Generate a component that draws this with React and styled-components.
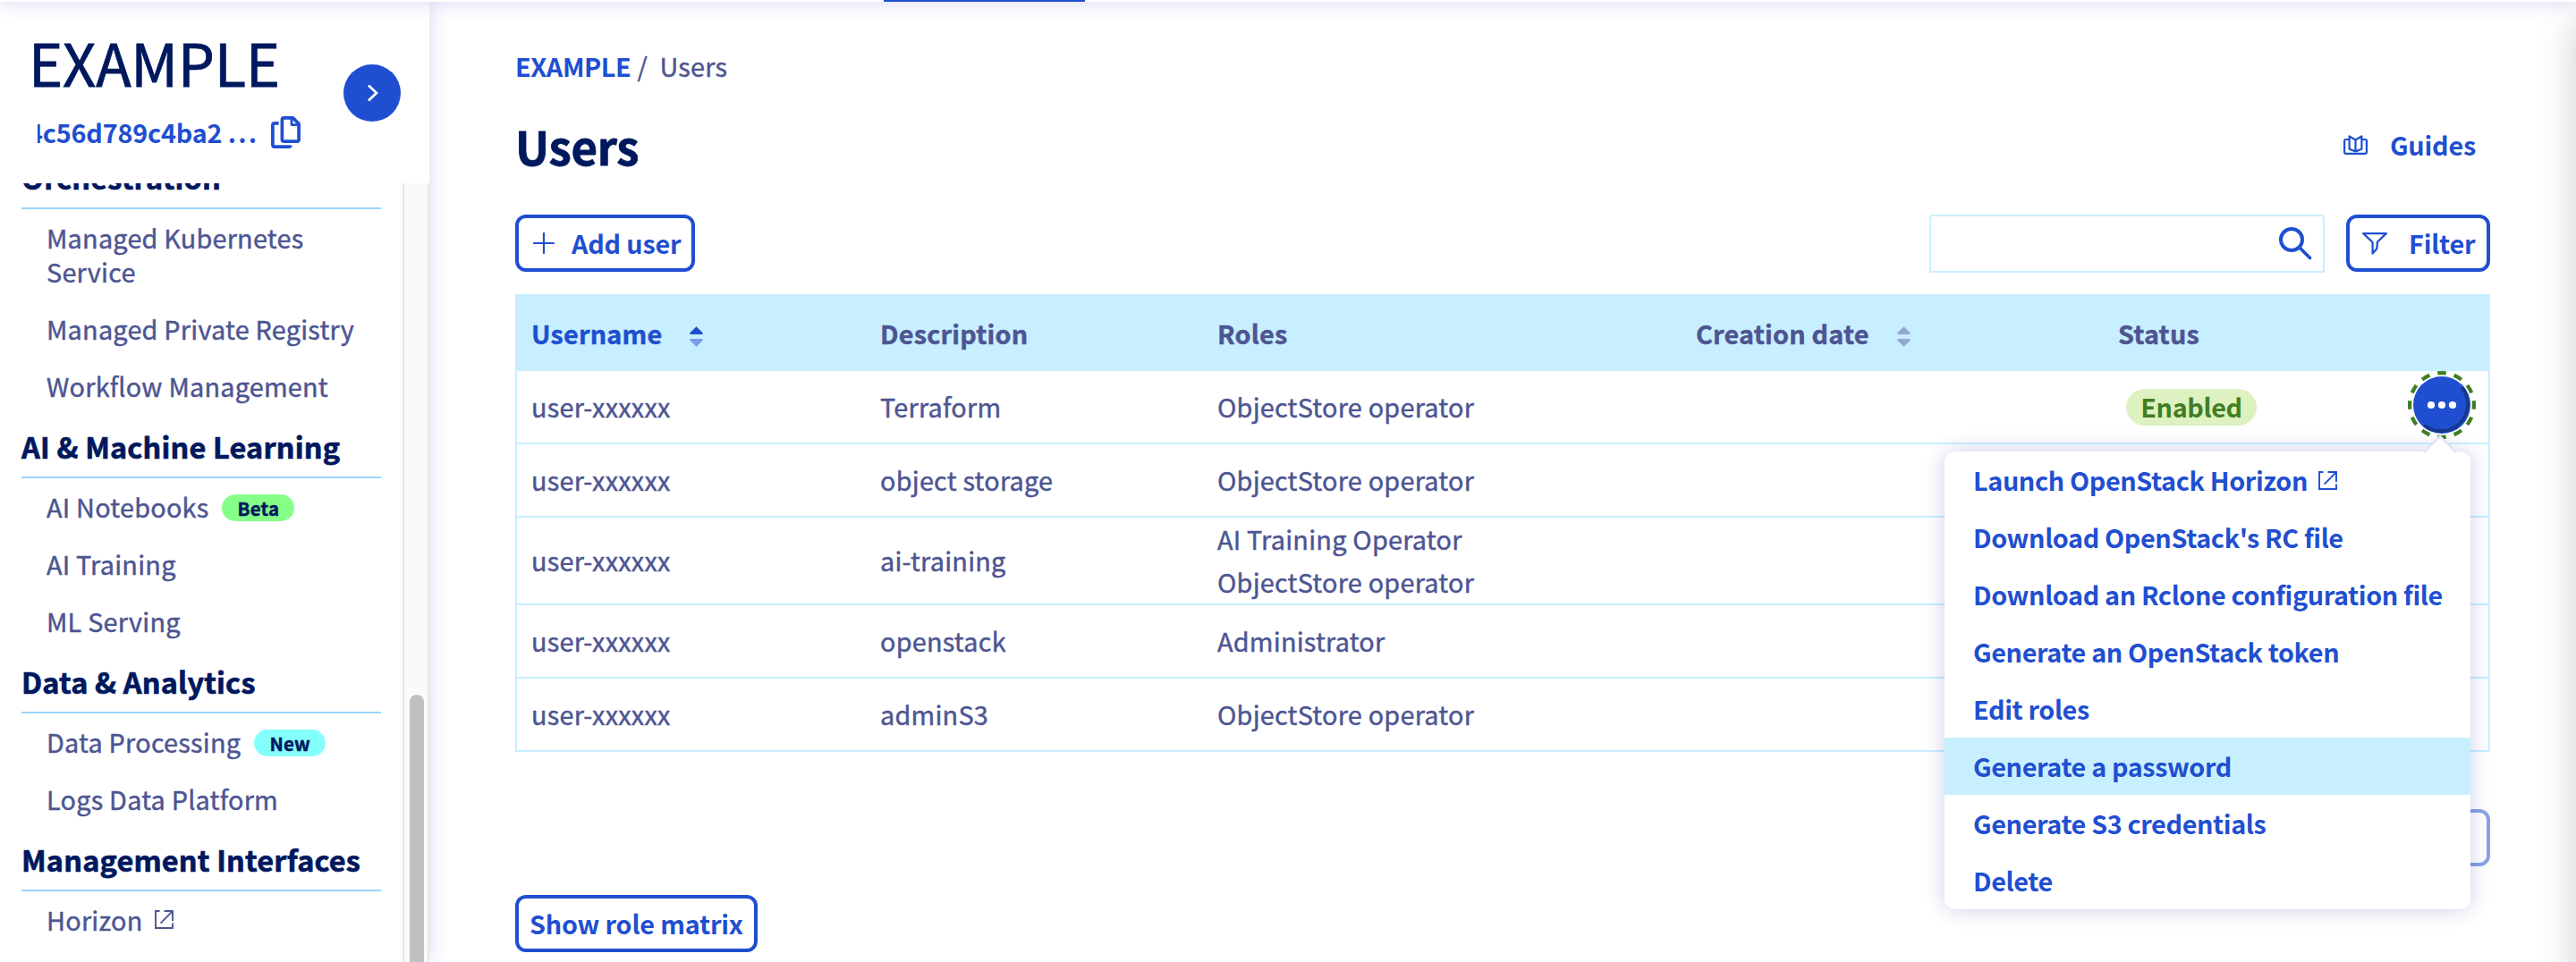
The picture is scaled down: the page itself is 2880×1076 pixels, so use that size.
import React from 'react';
import styled, { createGlobalStyle, css } from 'styled-components';

const c = {
  blue: '#1f4fd0',
  navy: '#00185e',
  text: '#4d5592',
  sky: '#c8efff',
  line: '#99d5fb',
};

const GlobalStyle = createGlobalStyle`
  * { box-sizing: border-box; }
  body {
    margin: 0;
    overflow: hidden;
    background: #fff;
    color: ${c.text};
    font-family: "Noto Sans CJK JP", "Noto Sans", sans-serif;
    font-size: 28.8px;
    line-height: 40px;
  }
  svg { display: block; flex: none; }
`;

const regular = css`
  font-weight: 400;
  letter-spacing: 0.24px;
  -webkit-text-stroke: 0.45px currentColor;
`;

const Frame = styled.div`
  position: relative;
  display: flex;
  flex-direction: column;
  height: 1076px;
  overflow: hidden;
`;

const TopBar = styled.header`
  position: relative;
  z-index: 2;
  flex: none;
  display: flex;
  align-items: flex-end;
  height: 80px;
  margin-top: -78px;
  padding-left: 988px;
  background: #fff;
  box-shadow: 0 0 22px rgba(10, 10, 170, 0.17);
`;

const ActiveTab = styled.div`
  width: 225px;
  height: 4px;
  background: ${c.blue};
`;

const Body = styled.div`
  flex: 1;
  min-height: 0;
  display: flex;
`;

const Drawer = styled.aside`
  position: absolute;
  top: 24px;
  left: 100%;
  width: 80px;
  height: 1200px;
  box-shadow: 0 0 40px rgba(70, 76, 92, 0.28);
`;

const Sidebar = styled.nav`
  flex: none;
  width: 480px;
  display: flex;
  flex-direction: column;
  background: #fff;
  box-shadow: 0 0 22px rgba(10, 10, 170, 0.16);
`;

const Project = styled.div`
  flex: none;
  display: flex;
  justify-content: space-between;
  height: 203px;
  padding: 20px 32px 0 32px;
`;

const ProjectName = styled.div`
  color: ${c.navy};
  font-size: 65px;
  line-height: 94px;
  letter-spacing: -0.3px;
  -webkit-text-stroke: 0.8px currentColor;
`;

const ProjectId = styled.div`
  display: flex;
  align-items: center;
  margin: 12px 0 0 10px;
  color: ${c.blue};
  font-weight: 700;
`;

const IdText = styled.span`
  width: 261px;
  overflow: hidden;
  white-space: nowrap;
  text-indent: -11px;
  letter-spacing: -0.2px;
`;

const Dots = styled.span`
  letter-spacing: 2.2px;
`;

const Collapse = styled.button`
  display: flex;
  align-items: center;
  justify-content: center;
  width: 64px;
  height: 64px;
  margin-top: 50px;
  padding: 0;
  border: 0;
  border-radius: 50%;
  background: ${c.blue};
`;

const MenuArea = styled.div`
  flex: 1;
  min-height: 0;
  display: flex;
  overflow: hidden;
`;

const MenuList = styled.div`
  flex: 1;
  height: max-content;
  margin-top: -42px;
  padding: 0 24px;
`;

const Track = styled.div`
  width: 30px;
  border: solid #e8e8e8;
  border-width: 0 2px;
  padding: 572px 4px 0 6px;
  background: #fafafa;
`;

const Thumb = styled.div`
  height: 400px;
  border-radius: 8px;
  background: #c1c1c1;
`;

const GroupTitle = styled.h2`
  margin: 0;
  border-bottom: 2px solid ${c.line};
  color: ${c.navy};
  font-size: 32.4px;
  font-weight: 700;
  line-height: 69px;
  letter-spacing: 0.2px;
  -webkit-text-stroke: 0.7px currentColor;
  white-space: nowrap;
`;

const Item = styled.a`
  display: flex;
  align-items: center;
  padding: 13px 16px 13px 28px;
  line-height: 38px;
  ${regular}
`;

const Tag = styled.span`
  display: flex;
  align-items: center;
  justify-content: center;
  width: ${(p) => p.$width}px;
  height: 30px;
  margin: 2px 0 0 15px;
  border-radius: 15px;
  background: ${(p) => p.$color};
  color: ${c.navy};
  font-size: 20.5px;
  font-weight: 700;
  line-height: 30px;
`;

const Main = styled.main`
  flex: 1;
  padding: 52px 96px 0;
`;

const Crumbs = styled.div`
  display: flex;
  ${regular}
`;

const CrumbLink = styled.a`
  color: ${c.blue};
  font-weight: 700;
  letter-spacing: -0.4px;
  -webkit-text-stroke: 0;
`;

const Slash = styled.span`
  width: 25px;
  margin-left: 7px;
`;

const TitleRow = styled.div`
  display: flex;
  align-items: center;
  justify-content: space-between;
  height: 64px;
  margin-top: 37px;
`;

const Title = styled.h1`
  margin: 0;
  color: ${c.navy};
  font-size: 51px;
  line-height: 64px;
  letter-spacing: -0.3px;
  -webkit-text-stroke: 0.8px currentColor;
`;

const GuidesLink = styled.a`
  display: flex;
  align-items: center;
  gap: 25px;
  padding: 0 16px 2px 0;
  color: ${c.blue};
  font-weight: 700;
  letter-spacing: -0.2px;
`;

const Toolbar = styled.div`
  display: flex;
  align-items: flex-start;
  height: 65px;
  margin-top: 45px;
`;

const Button = styled.button`
  display: flex;
  align-items: center;
  gap: ${(p) => p.$gap || 0}px;
  width: ${(p) => p.$width}px;
  height: 64px;
  padding: 0 0 0 ${(p) => p.$pad || 12}px;
  border: 4px solid ${c.blue};
  border-radius: 12px;
  background: #fff;
  color: ${c.blue};
  font: inherit;
  font-weight: 700;
  letter-spacing: -0.2px;
  white-space: nowrap;
  opacity: ${(p) => (p.disabled ? 0.52 : 1)};
`;

const Search = styled.div`
  display: flex;
  align-items: flex-start;
  justify-content: flex-end;
  width: 442px;
  height: 65px;
  margin: 0 24px 0 auto;
  padding: 12px 12px 0 0;
  border: 2px solid ${c.sky};
  border-radius: 4px 4px 0 0;
`;

const Table = styled.div`
  margin-top: 24px;
  border: solid ${c.sky};
  border-width: 0 2px;
`;

const Row = styled.div`
  display: grid;
  grid-template-columns: 390px 377px 535px 472px 1fr;
  align-items: center;
  min-height: 82px;
  border-bottom: 2px solid ${c.sky};
  line-height: 48px;
  ${regular}
`;

const HeadRow = styled(Row)`
  height: 86px;
  border: 0;
  padding-top: 1px;
  background: ${c.sky};
  font-weight: 700;
  letter-spacing: 0.2px;
`;

const Cell = styled.div`
  display: flex;
  padding-left: 16px;
  color: ${(p) => (p.$active ? c.blue : 'inherit')};
`;

const Stack = styled(Cell)`
  flex-direction: column;
`;

const SortIcon = styled.svg`
  margin: 16px 0 0 31px;
`;

const LastCell = styled(Cell)`
  align-items: flex-start;
  justify-content: space-between;
  height: 80px;
  padding: 6px 20px 0 25px;
`;

const Status = styled.span`
  width: 146px;
  height: 41px;
  margin-top: 14px;
  border-radius: 21px;
  background: #def1c0;
  color: #3f7f22;
  font-weight: 700;
  letter-spacing: -0.35px;
  line-height: 40px;
  text-align: center;
  -webkit-text-stroke: 0;
`;

const ActionAnchor = styled.div`
  position: relative;
  width: 64px;
  height: 64px;
`;

const ActionRing = styled.svg`
  position: absolute;
  left: -6px;
  top: -6px;
`;

const Dropdown = styled.div`
  position: absolute;
  z-index: 1;
  top: 84px;
  right: 0;
  width: 588px;
  border-radius: 12px;
  background: #fff;
  box-shadow: 0 0 24px rgba(10, 10, 150, 0.2);
  -webkit-text-stroke: 0;
`;

const Arrow = styled.svg`
  position: absolute;
  top: -19px;
  right: 14px;
`;

const Option = styled.a`
  display: flex;
  align-items: center;
  gap: 12px;
  height: 64px;
  padding: 0 32px;
  background: ${(p) => (p.$active ? c.sky : 'transparent')};
  color: ${c.blue};
  font-weight: 700;
  letter-spacing: -0.38px;
  line-height: 40px;
  white-space: nowrap;
`;

const Pager = styled.div`
  display: flex;
  justify-content: flex-end;
  margin: 64px 0 32px;
`;

const HorizonMark = styled.span`
  margin: -1px 0 0 13px;
`;

const ExternalIcon = () => (
  <svg width="21" height="21" viewBox="0 0 21 21" fill="none" stroke="currentColor" strokeWidth="1.9">
    <path d="M5.5 1H1V20H20V14.5M10.5 1H20V12M19.6 1.4L6.6 14.6" />
  </svg>
);

const Sorter = ({ up = 0.45, down = 0.45 }) => (
  <SortIcon width="15" height="23" viewBox="0 0 15 23" fill="currentColor">
    <path opacity={up} d="M7.5 0.3L14.6 7.2Q15 8.8 13.8 9H1.2Q0 8.8 .4 7.2Z" />
    <path opacity={down} d="M7.5 22.7L14.6 15.8Q15 14.2 13.8 14H1.2Q0 14.2 .4 15.8Z" />
  </SortIcon>
);

const groups = [
  { title: 'Orchestration', items: [['Managed Kubernetes Service'], ['Managed Private Registry'], ['Workflow Management']] },
  { title: 'AI & Machine Learning', items: [['AI Notebooks', 'Beta', '#86ff88', 81], ['AI Training'], ['ML Serving']] },
  { title: 'Data & Analytics', items: [['Data Processing', 'New', '#85fffb', 80], ['Logs Data Platform']] },
  { title: 'Management Interfaces', items: [['Horizon', 'external']] },
];

const users = [
  ['Terraform', ['ObjectStore operator']],
  ['object storage', ['ObjectStore operator']],
  ['ai-training', ['AI Training Operator', 'ObjectStore operator']],
  ['openstack', ['Administrator']],
  ['adminS3', ['ObjectStore operator']],
];

const options = [
  'Launch OpenStack Horizon',
  "Download OpenStack's RC file",
  'Download an Rclone configuration file',
  'Generate an OpenStack token',
  'Edit roles',
  'Generate a password',
  'Generate S3 credentials',
  'Delete',
];

function SideMenu() {
  return (
    <Sidebar>
      <Project>
        <div>
          <ProjectName>EXAMPLE</ProjectName>
          <ProjectId>
            <IdText>4c56d789c4ba2 <Dots>...</Dots></IdText>
            <svg width="33" height="36" viewBox="0 0 33 36" fill="none" stroke="currentColor" strokeWidth="3.7" strokeLinejoin="round">
              <path d="M14.5 1.9H24.5L31.1 8.5V26Q31.1 28.1 29 28.1H14.5Q12.4 28.1 12.4 26V4Q12.4 1.9 14.5 1.9Z" />
              <path d="M23 2V9.6H31" strokeWidth="2.8" />
              <path d="M8.6 7.8H4Q1.9 7.8 1.9 10V32Q1.9 34.1 4 34.1H20Q21.6 34.1 22 32.6" />
            </svg>
          </ProjectId>
        </div>
        <Collapse aria-label="Collapse">
          <svg width="14" height="22" viewBox="0 0 14 22" fill="none" stroke="#fff" strokeWidth="2.8">
            <path d="M3 2.5L12 11L3 19.5" />
          </svg>
        </Collapse>
      </Project>
      <MenuArea>
        <MenuList>
          {groups.map((g) => (
            <div key={g.title}>
              <GroupTitle>{g.title}</GroupTitle>
              {g.items.map(([label, tag, color, width]) => (
                <Item key={label}>
                  {label}
                  {tag === 'external' && <HorizonMark><ExternalIcon /></HorizonMark>}
                  {color && <Tag $color={color} $width={width}>{tag}</Tag>}
                </Item>
              ))}
            </div>
          ))}
        </MenuList>
        <Track><Thumb /></Track>
      </MenuArea>
    </Sidebar>
  );
}

function RowActions() {
  return (
    <ActionAnchor>
      <ActionRing width="76" height="76" viewBox="0 0 76 76" fill="none">
        <circle cx="38" cy="38" r="35.9" stroke="#3f7f22" strokeWidth="4.2" pathLength="360" strokeDasharray="15.4 14.6" strokeDashoffset="7.7" />
        <circle cx="38" cy="38" r="32" fill={c.blue} />
        <path d="M60.4 18.2A30 30 0 0 1 18.2 60.4" stroke="#17388c" strokeWidth="4" />
        <g fill="#fff">
          <circle cx="26" cy="38" r="4.1" />
          <circle cx="38" cy="38" r="4.1" />
          <circle cx="50" cy="38" r="4.1" />
        </g>
      </ActionRing>
      <Dropdown>
        <Arrow width="40" height="21" viewBox="0 0 40 21" fill="#fff">
          <path d="M2 20L20 2L38 20" stroke="#e4e2f4" strokeWidth="2.4" />
          <path d="M3 21L20 3.6L37 21Z" />
        </Arrow>
        {options.map((o, i) => (
          <Option key={o} $active={i === 5}>
            {o}
            {i === 0 && <ExternalIcon />}
          </Option>
        ))}
      </Dropdown>
    </ActionAnchor>
  );
}

export default function App() {
  return (
    <Frame>
      <GlobalStyle />
      <TopBar><ActiveTab /></TopBar>
      <Body>
        <SideMenu />
        <Main>
          <Crumbs>
            <CrumbLink>EXAMPLE</CrumbLink>
            <Slash>/</Slash>
            <span>Users</span>
          </Crumbs>
          <TitleRow>
            <Title>Users</Title>
            <GuidesLink>
              <svg width="27" height="22" viewBox="0 0 27 22" fill="none" stroke="currentColor" strokeWidth="2.2" strokeLinejoin="round">
                <path d="M6.5 5H2.5Q1.1 5 1.1 6.5V19Q1.1 20.8 2.8 20.8H24.2Q25.9 20.8 25.9 19V6.5Q25.9 5 24.5 5H20.5" />
                <path d="M13.5 5.5L6.6 1.4V15.8L13.5 18.4L20.4 15.8V1.4ZM13.5 5.5V18.4" />
              </svg>
              Guides
            </GuidesLink>
          </TitleRow>
          <Toolbar>
            <Button $width={201} $pad={16} $gap={19}>
              <svg width="24" height="24" viewBox="0 0 24 24" stroke="currentColor" strokeWidth="2.2" strokeLinecap="round">
                <path d="M12 1V23M1 12H23" />
              </svg>
              Add user
            </Button>
            <Search>
              <svg width="38" height="38" viewBox="0 0 38 38" fill="none" stroke={c.blue} strokeWidth="4" strokeLinecap="round">
                <circle cx="15" cy="14" r="12" />
                <path d="M24 23L35.5 34.500" strokeWidth="3.7" />
              </svg>
            </Search>
            <Button $width={161} $pad={14} $gap={24}>
              <svg width="28" height="25" viewBox="0 0 28 25" fill="none" stroke="currentColor" strokeWidth="2.3" strokeLinejoin="round">
                <path d="M1.2 1.2H26.8L17 10.5L16.4 18L11.6 23.5V11Z" />
              </svg>
              Filter
            </Button>
          </Toolbar>
          <Table>
            <HeadRow>
              <Cell $active>Username<Sorter up={1} down={0.5} /></Cell>
              <Cell>Description</Cell>
              <Cell>Roles</Cell>
              <Cell>Creation date<Sorter /></Cell>
              <Cell>Status</Cell>
            </HeadRow>
            {users.map(([description, roles], i) => (
              <Row key={description}>
                <Cell>user-xxxxxx</Cell>
                <Cell>{description}</Cell>
                <Stack>{roles.map((r) => <span key={r}>{r}</span>)}</Stack>
                <Cell />
                {i === 0 && (
                  <LastCell>
                    <Status>Enabled</Status>
                    <RowActions />
                  </LastCell>
                )}
              </Row>
            ))}
          </Table>
          <Pager><Button $width={120} disabled aria-label="Next page" /></Pager>
          <Button $width={271}>Show role matrix</Button>
        </Main>
      </Body>
      <Drawer />
    </Frame>
  );
}
